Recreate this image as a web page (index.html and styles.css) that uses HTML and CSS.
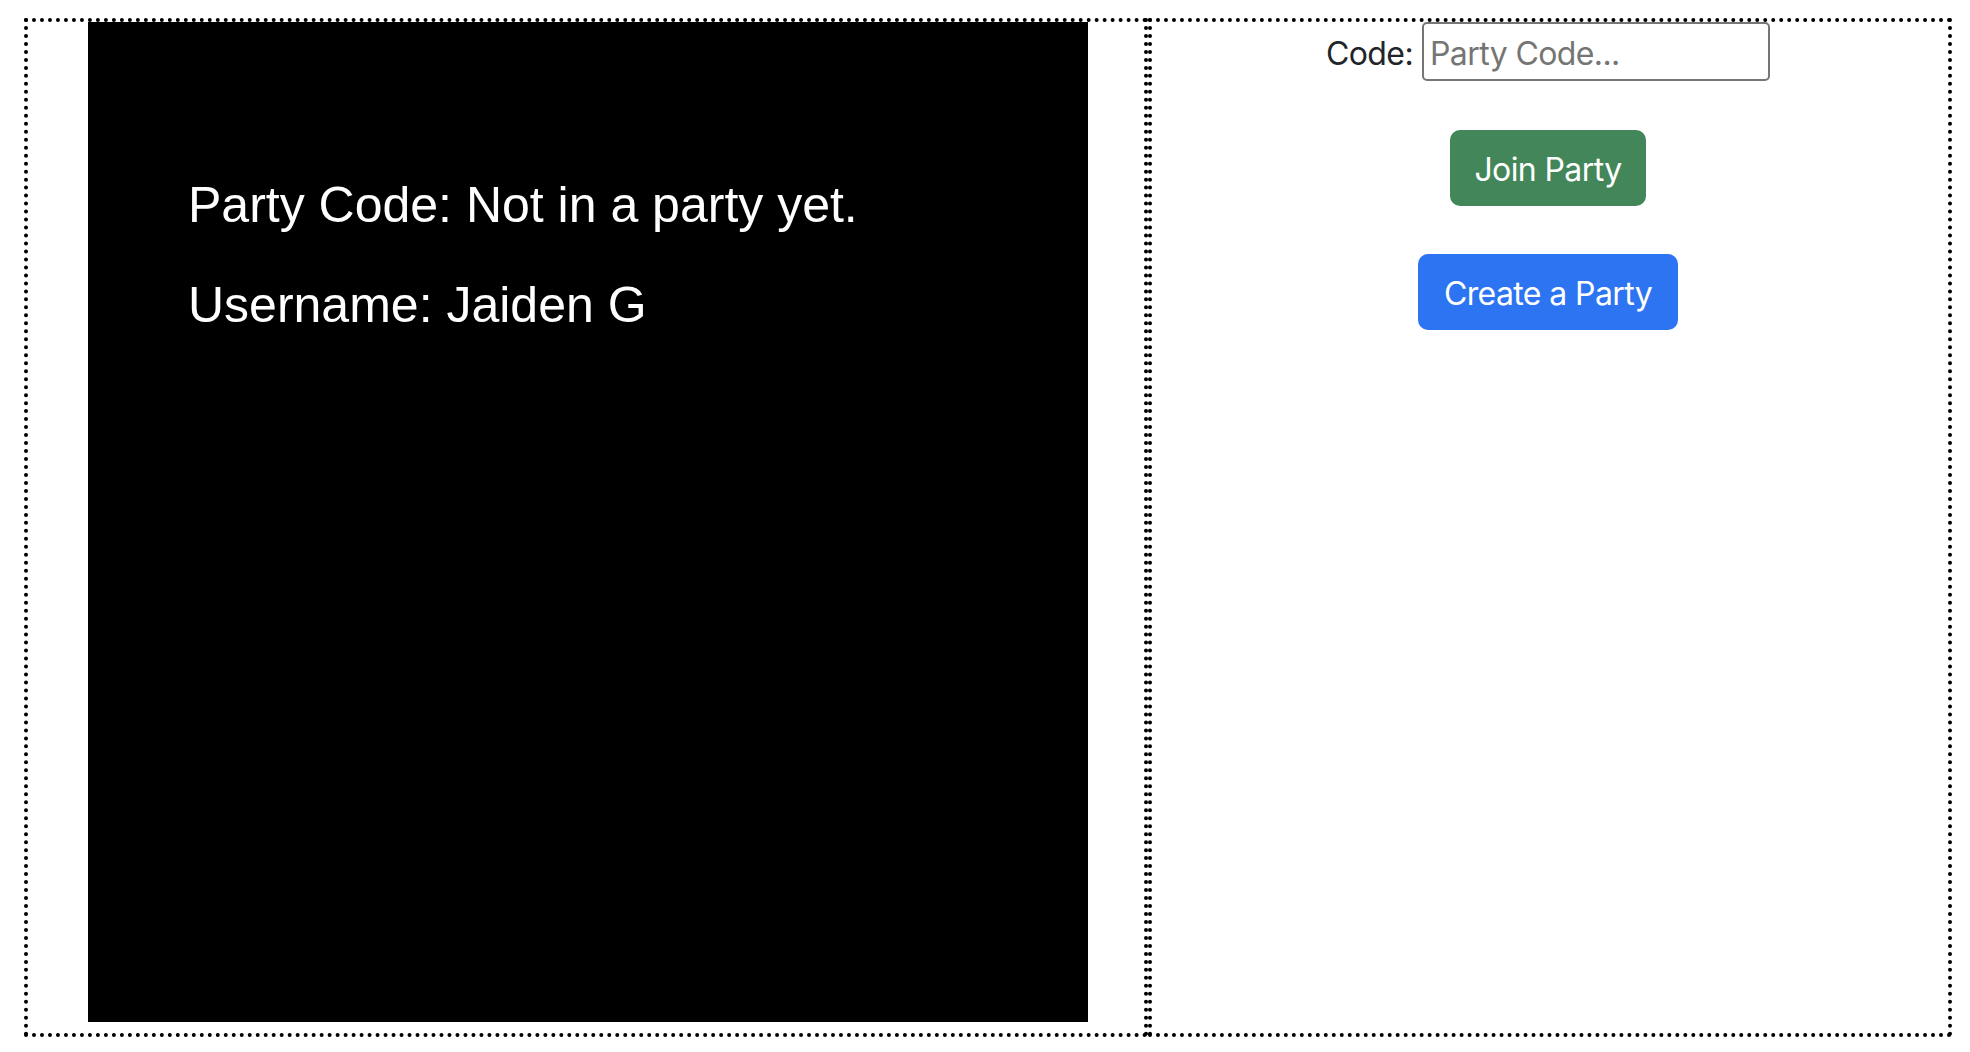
FILE: index.html
```html
<!DOCTYPE html>
<html lang="en">
<head>
<meta charset="utf-8">
<title>Party</title>
<link rel="stylesheet" href="styles.css">
</head>
<body>
<div class="page">
  <section class="panel panel-left">
    <div class="screen">
      <div class="screen-line">Party Code: Not in a party yet.</div>
      <div class="screen-line">Username: Jaiden G</div>
    </div>
  </section>
  <section class="panel panel-right">
    <div class="join-row">
      <label class="code-label" for="code">Code:</label>
      <input id="code" class="code-input" type="text" placeholder="Party Code...">
    </div>
    <button class="btn btn-join" type="button">Join Party</button>
    <button class="btn btn-create" type="button">Create a Party</button>
  </section>
</div>
</body>
</html>
```

FILE: styles.css
```css
html, body {
  margin: 0;
  padding: 0;
  background: #ffffff;
}

body {
  font-family: Inter, "Noto Sans", "Liberation Sans", sans-serif;
  color: #212529;
}

.page {
  display: flex;
  padding: 18px 0 0 24px;
}

.panel {
  box-sizing: border-box;
  height: 1019px;
  border: 4px dotted #000000;
}

.panel-left {
  width: 1124px;
  padding: 0 0 11px 60px;
}

.screen {
  width: 1000px;
  height: 1000px;
  background: #000000;
  box-sizing: border-box;
  padding: 133px 0 0 100px;
  color: #ffffff;
  font-family: "Liberation Sans", Arial, sans-serif;
  font-size: 50px;
  line-height: 100px;
}

.screen-line {
  white-space: nowrap;
}

.panel-right {
  width: 804px;
  padding: 0 4px 0 0;
  display: flex;
  flex-direction: column;
  align-items: center;
}

.join-row {
  display: flex;
  align-items: baseline;
  gap: 9px;
}

.code-label {
  font-size: 32px;
  letter-spacing: -0.6px;
  color: #212529;
}

.code-input {
  box-sizing: border-box;
  width: 348px;
  height: 59px;
  margin: 0;
  padding: 3px 6px 0;
  border: 2px solid #767676;
  border-radius: 5px;
  font-family: Inter, "Noto Sans", sans-serif;
  font-size: 32px;
  letter-spacing: -0.6px;
  color: #212529;
  background: #ffffff;
  outline: none;
}

.code-input::placeholder {
  color: #757575;
  opacity: 1;
}

.btn {
  box-sizing: border-box;
  height: 76px;
  padding: 3px 0 0;
  border: 2px solid transparent;
  border-radius: 10px;
  font-family: Inter, "Noto Sans", sans-serif;
  font-size: 32px;
  line-height: 48px;
  letter-spacing: -0.6px;
  white-space: nowrap;
  text-align: center;
  color: #ffffff;
  cursor: pointer;
}

.btn-join {
  margin-top: 49px;
  width: 196px;
  background: #43865a;
  border-color: #43865a;
}

.btn-create {
  margin-top: 48px;
  width: 260px;
  background: #2c74f2;
  border-color: #2c74f2;
}
```
